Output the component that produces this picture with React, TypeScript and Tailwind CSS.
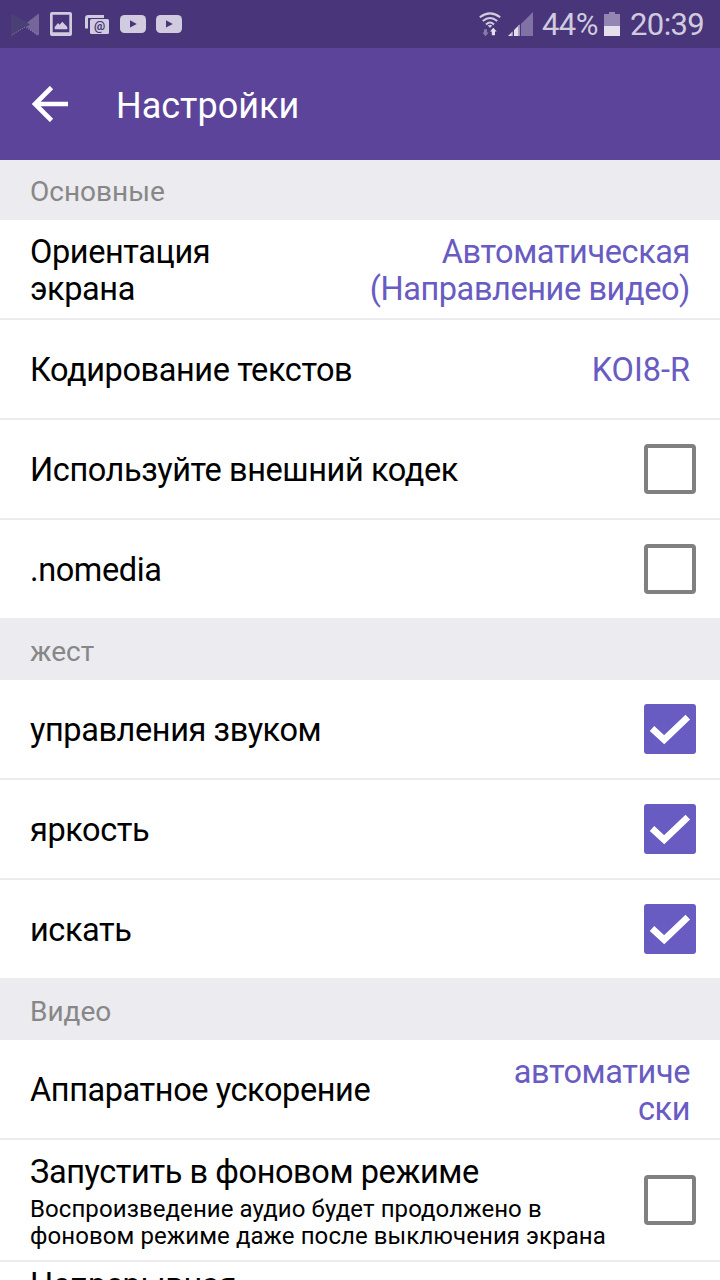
import React from 'react';

const Checkbox: React.FC<{ checked: boolean }> = ({ checked }) => {
  if (!checked) {
    return <span role="checkbox" aria-checked="false" className="block w-[52px] h-[50px] shrink-0 rounded-[4px] border-4 border-[#808080]" />;
  }
  return (
    <span role="checkbox" aria-checked="true" className="block w-[52px] h-[50px] shrink-0 rounded-[3px] bg-[#685bc2]">
      <svg width="52" height="50" viewBox="0 0 52 50" fill="none">
        <path d="M8 24.5L20.2 35.7L43.8 13.2" stroke="#fff" strokeWidth="6.6" />
      </svg>
    </span>
  );
};

const SectionTitle: React.FC<{ children: React.ReactNode }> = ({ children }) => (
  <h2 className="h-[60px] pl-[30px] pt-[3px] flex items-center bg-[#ebebf0] text-[28px] text-[#878787]">{children}</h2>
);

const Row: React.FC<{ label: React.ReactNode; children: React.ReactNode; className?: string }> = ({ label, children, className = 'pr-[30px]' }) => (
  <div className={`h-[100px] pl-[30px] flex items-center justify-between border-b-2 border-[#ebebf0] ${className}`}>
    <div className="text-[32.5px] leading-[37px] tracking-[-0.41px] pt-[3px]">{label}</div>
    {children}
  </div>
);

const CheckRow: React.FC<{ label: string; checked?: boolean }> = ({ label, checked = false }) => (
  <Row label={label} className="pr-6">
    <Checkbox checked={checked} />
  </Row>
);

const Value: React.FC<{ children: React.ReactNode; className?: string }> = ({ children, className = 'tracking-[-0.41px]' }) => (
  <div className={`text-[32.5px] leading-[37px] pt-[3px] text-right text-[#685bc2] ${className}`}>{children}</div>
);

const YoutubeIcon: React.FC = () => (
  <svg width="26" height="18" viewBox="0 0 26 18">
    <rect width="26" height="18" rx="4.5" fill="#d0cbdf" />
    <path d="M10 5.3V12.5L16.8 8.9Z" fill="#49357a" />
  </svg>
);

const StatusBar: React.FC = () => (
  <div className="h-12 pl-[11px] pr-[15px] flex items-center justify-between bg-[#49357a] text-[#d0cbdf]">
    <div className="flex items-center">
      <svg width="28" height="23" viewBox="0 0 28 23">
        <path d="M27 1Q28 0 28 2V21Q28 23 26 22L13 12Z" fill="#75659a" />
        <path d="M0 2Q0 0 2 1L19 11.5L2 22Q0 23 0 21Z" fill="#4b4075" />
        <path d="M.7 22L14 14L27 22" fill="none" stroke="#a79dc1" strokeWidth=".7" strokeDasharray="1 1.4" />
      </svg>
      <svg className="ml-[11px]" width="22" height="24" viewBox="0 0 22 24">
        <path fillRule="evenodd" d="M2 0H20Q22 0 22 2V22Q22 24 20 24H2Q0 24 0 22V2Q0 0 2 0ZM2.7 2.7V20.3H19.3V2.7Z" fill="#d0cbdf" />
        <path d="M4.7 17.2V15L8 11L9.6 12.8L12.3 9.8L17.3 15V17.2Z" fill="#d0cbdf" />
      </svg>
      <svg className="ml-[13px]" width="24" height="19" viewBox="0 0 24 19">
        <path d="M1.5 13.5V3Q1.5 1.5 3 1.5H19" fill="none" stroke="#d0cbdf" strokeWidth="3" />
        <rect x="4" y="3.2" width="20" height="15.8" rx="1.5" fill="#49357a" />
        <rect x="5" y="4" width="19" height="15" rx="1.5" fill="#d0cbdf" />
        <text x="14.5" y="15" textAnchor="middle" fontFamily="Roboto, sans-serif" fontSize="12.5" fontWeight="700" fill="#49357a">@</text>
      </svg>
      <div className="ml-[11px] flex gap-[10px]">
        <YoutubeIcon />
        <YoutubeIcon />
      </div>
    </div>
    <div className="flex items-center">
      <svg width="22" height="25" viewBox="0 0 22 25">
        <g fill="none" stroke="#d0cbdf" strokeWidth="2">
          <path d="M.8 5.3Q11 -2.5 21.2 5.3" />
          <path d="M3.8 9Q11 3 18.2 9" />
          <path d="M7 12.4Q11 8.7 15 12.4" />
        </g>
        <path d="M8.8 13.5Q11 11.8 13.2 13.5L11 16Z" fill="#d0cbdf" />
        <path d="M5 17.3H8V20.5H9.7L6.5 24.3L3.3 20.5H5Z" fill="#8879a8" />
        <path d="M14.3 15.8L17.7 19.6H16V23.3H12.8V19.6H11Z" fill="#e3e0ec" />
      </svg>
      <svg className="ml-[7px]" width="25" height="24" viewBox="0 0 25 24">
        <path d="M13 12L25 0V24H13Z" fill="#8172a5" />
        <path d="M0 24L4.5 19.5V24ZM6 18L11.5 12.5V24H6Z" fill="#e3e0ec" />
        <path d="M3.5 20.5L4.5 19.5V24H3.5ZM10 14L11.5 12.5V24H10Z" fill="#a79dc1" />
      </svg>
      <span className="ml-[9px] w-[56px] text-[31px] leading-none tracking-[-0.6px] pt-px">44%</span>
      <svg className="ml-[6px]" width="16" height="24" viewBox="0 0 16 24">
        <path d="M0 2H5V0H11V2H16V24H0Z" fill="#9486b2" />
        <path d="M0 14H16V24H0Z" fill="#e3e0ec" />
      </svg>
      <span className="ml-[10px] w-[75px] text-[31px] leading-none tracking-[-0.6px] pt-px">20:39</span>
    </div>
  </div>
);

const App: React.FC = () => {
  return (
    <div className="w-[720px] h-[1280px] overflow-hidden bg-white text-black font-[Roboto,sans-serif]">
      <StatusBar />

      <header className="h-28 pl-8 flex items-center bg-[#5c449b] text-white">
        <svg width="36" height="36" viewBox="0 0 36 36" fill="none" stroke="#fff" strokeWidth="4.6">
          <path d="M36 18H4M19.5 1.5L3 18L19.5 34.5" />
        </svg>
        <h1 className="ml-12 pt-[3px] text-[36px] leading-none">Настройки</h1>
      </header>

      <main>
        <SectionTitle>Основные</SectionTitle>
        <Row label={<>Ориентация<br />экрана</>}>
          <Value>Автоматическая<br />(Направление видео)</Value>
        </Row>
        <Row label="Кодирование текстов">
          <Value className="tracking-normal">KOI8-R</Value>
        </Row>
        <CheckRow label="Используйте внешний кодек" />
        <CheckRow label=".nomedia" />

        <SectionTitle>жест</SectionTitle>
        <CheckRow label="управления звуком" checked />
        <CheckRow label="яркость" checked />
        <CheckRow label="искать" checked />

        <SectionTitle>Видео</SectionTitle>
        <Row label="Аппаратное ускорение">
          <Value>автоматиче<br />ски</Value>
        </Row>
        <div className="h-[122px] pl-[30px] pr-6 flex items-center justify-between border-b-2 border-[#ebebf0]">
          <div className="pt-[3px]">
            <div className="text-[32.5px] leading-[37px] tracking-[-0.41px]">Запустить в фоновом режиме</div>
            <div className="mt-[5px] text-[24px] leading-[27px] tracking-[0.08px]">Воспроизведение аудио будет продолжено в<br />фоновом режиме даже после выключения экрана</div>
          </div>
          <Checkbox checked={false} />
        </div>
        <div className="pl-[30px] pt-[5px] text-[32.5px] leading-[37px] tracking-[-0.41px]">Непрерывная</div>
      </main>
    </div>
  );
};

export default App;
